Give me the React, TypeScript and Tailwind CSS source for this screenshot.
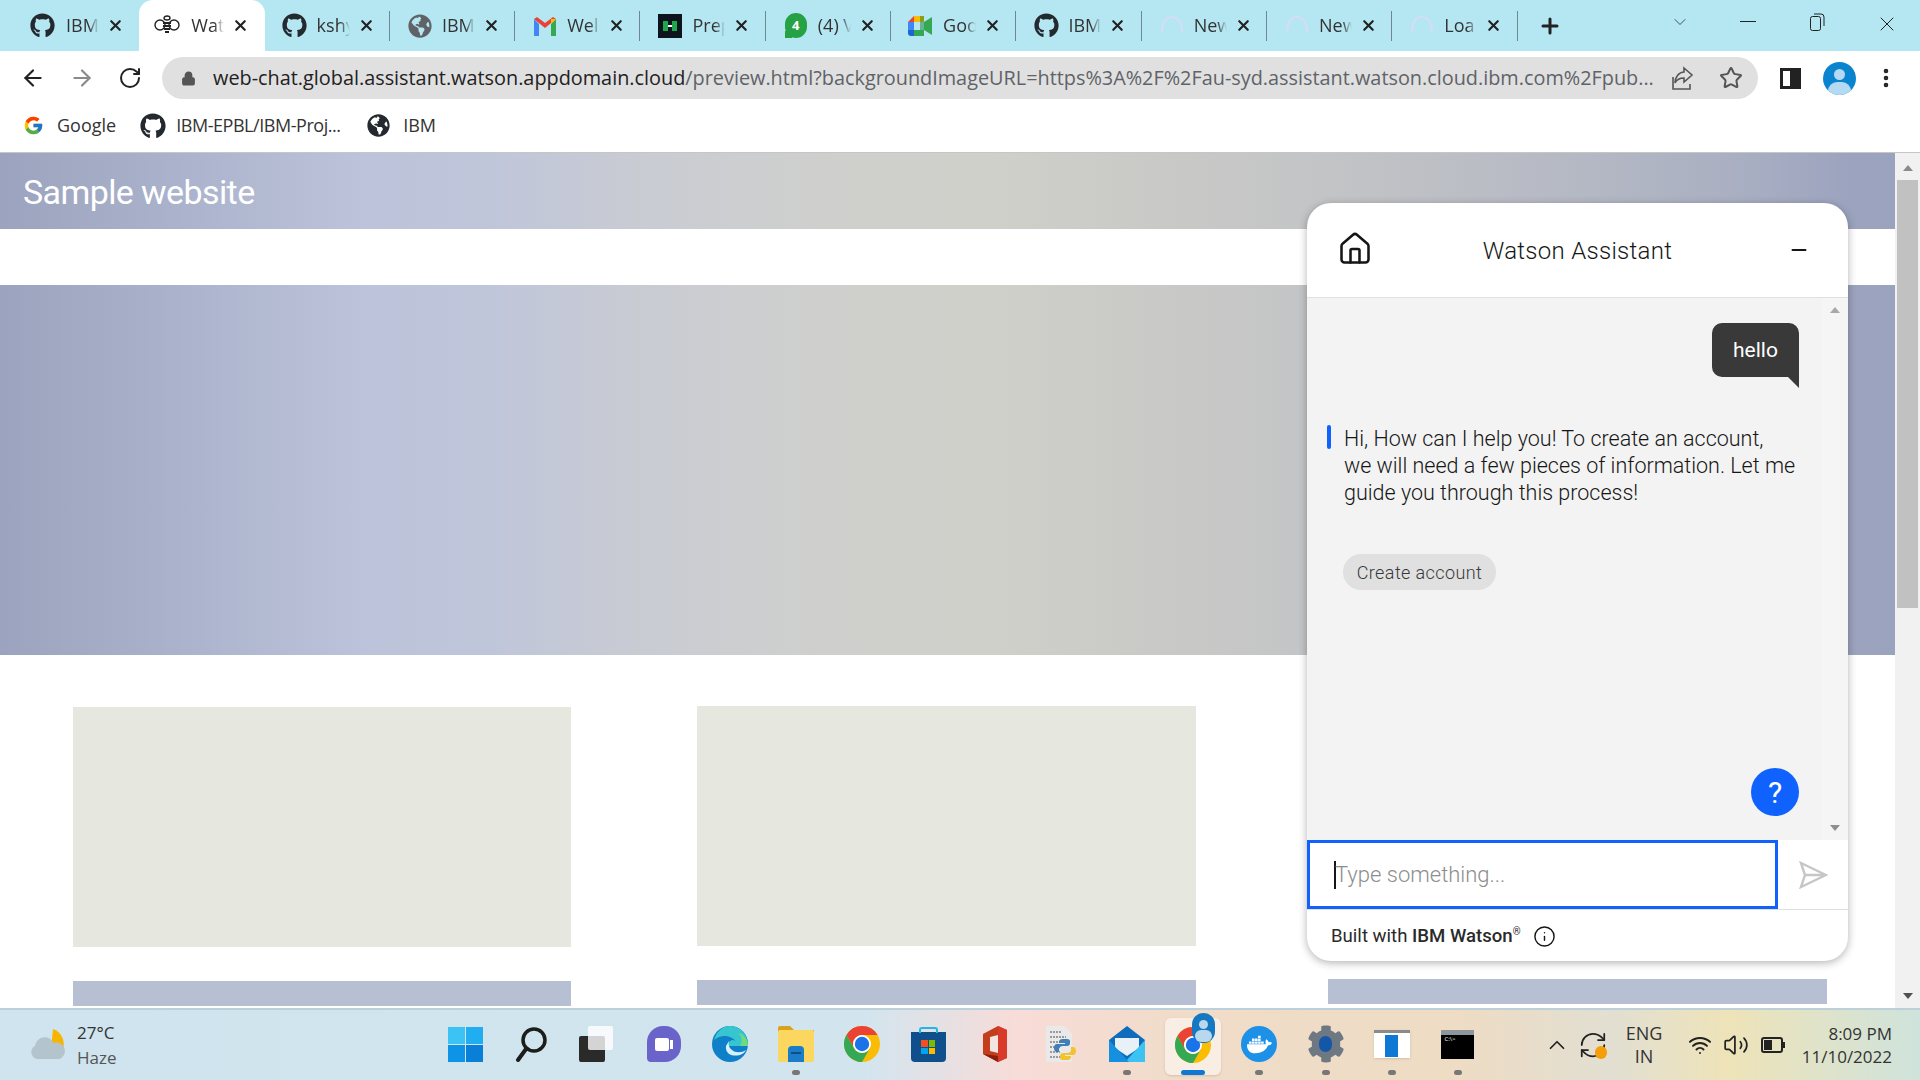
import React from "react";
import { X, Plus, ArrowLeft, ArrowRight, RotateCw, Lock, Star, EllipsisVertical, Home, Minus, ChevronDown, ChevronUp, Info, Wifi, Volume2, RefreshCw } from "lucide-react";
import { FaGithub, FaGlobeAmericas, FaDocker, FaCog } from "react-icons/fa";
import { FcGoogle } from "react-icons/fc";

const uiFont = "[font-family:'Open_Sans',sans-serif]";
const chatFont = "[font-family:Roboto,sans-serif]";

const Spinner = () => (
  <svg width="26" height="26" viewBox="0 0 26 26" fill="none">
    <path d="M3 19C3 10 7 4 13 4s10 6 10 15" stroke="#d5dcf8" strokeWidth="2.2" />
  </svg>
);

const WatsonBee = () => (
  <svg width="26" height="22" viewBox="0 0 26 22" fill="none" stroke="#222" strokeWidth="1.4">
    <ellipse cx="6" cy="10" rx="5" ry="5" />
    <ellipse cx="20" cy="10" rx="5" ry="5" />
    <ellipse cx="13" cy="3" rx="3" ry="2" fill="#fff" />
    <path d="M9 8h8M9 11h8M10 14h6M11 17h4" strokeWidth="2" />
  </svg>
);

const Gmail = () => (
  <svg width="24" height="20" viewBox="0 0 24 20">
    <path d="M1 3v17h5V8z" fill="#4285f4" />
    <path d="M23 3v17h-5V8z" fill="#34a853" />
    <path d="M1 3l11 9 11-9-3-2-8 6-8-6z" fill="#ea4335" />
    <path d="M18 3l5 0-5 5z" fill="#fbbc04" />
  </svg>
);

const HackerRank = () => (
  <div className="flex h-[24px] w-[24px] items-center justify-center bg-[#0e141e]">
    <div className="flex h-[10px] w-[14px] items-stretch justify-between">
      <div className="w-[5px] bg-[#1ba94c]" />
      <div className="mt-[4px] h-[2px] w-[4px] bg-white" />
      <div className="w-[5px] bg-[#1ba94c]" />
    </div>
  </div>
);

const WhatsApp = () => (
  <div className="relative flex h-[25px] w-[22px] items-center justify-center rounded-full border-2 border-[#25a244] bg-[#25a244] text-[13px] font-bold text-white">
    4
    <div className="absolute -bottom-[2px] -left-[2px] h-[7px] w-[7px] bg-[#25a244]" />
  </div>
);

const Meet = () => (
  <svg width="26" height="22" viewBox="0 0 26 22">
    <path d="M6 1h10v6H6z" fill="#fbbc04" />
    <path d="M6 1L0 7h6z" fill="#ea4335" />
    <path d="M0 7h6v8H0z" fill="#4285f4" />
    <path d="M0 15h6v6H3a3 3 0 0 1-3-3z" fill="#1967d2" />
    <path d="M6 15h10v6H6z" fill="#34a853" />
    <path d="M16 7l8-5v18l-8-5z" fill="#34a853" />
    <path d="M16 1v14h-4V1z" fill="#188038" opacity="0.5" />
  </svg>
);

const Chrome = ({ size = 36 }: { size?: number }) => (
  <svg width={size} height={size} viewBox="4 4 40 40">
    <circle cx="24" cy="24" r="20" fill="#fbbc04" />
    <path d="M24 4A20 20 0 0 1 41.32 14H24A10 10 0 0 0 15.34 29L6.68 14A20 20 0 0 1 24 4z" fill="#ea4335" />
    <path d="M6.68 14L15.34 29A10 10 0 0 0 32.66 29L24 44A20 20 0 0 1 6.68 14z" fill="#34a853" />
    <circle cx="24" cy="24" r="10" fill="#fff" />
    <circle cx="24" cy="24" r="8" fill="#1a73e8" />
  </svg>
);

const tabs = [
  { icon: <FaGithub size={25} color="#24292f" />, label: "IBM" },
  { icon: <WatsonBee />, label: "Wat", active: true },
  { icon: <FaGithub size={25} color="#24292f" />, label: "kshy" },
  { icon: <FaGlobeAmericas size={24} color="#5f6368" />, label: "IBM" },
  { icon: <Gmail />, label: "Wel" },
  { icon: <HackerRank />, label: "Prep" },
  { icon: <WhatsApp />, label: "(4) V" },
  { icon: <Meet />, label: "Goo" },
  { icon: <FaGithub size={25} color="#24292f" />, label: "IBM" },
  { icon: <Spinner />, label: "New" },
  { icon: <Spinner />, label: "New" },
  { icon: <Spinner />, label: "Loa" },
];

const TabStrip = () => (
  <div className="flex h-[51px] shrink-0 items-stretch bg-[#b5e7f3] pl-[14px]">
    {tabs.map((tab, i) => (
      <div
        key={i}
        className={
          "flex w-[125.3px] items-center " +
          (i < 2 ? "pl-[15px] " : "pl-[17px] ") +
          (tab.active ? "rounded-t-[14px] bg-white " : "") +
          (!tab.active && i !== 0 ? "relative" : "")
        }
      >
        <div className="flex w-[26px] shrink-0 justify-center">{tab.icon}</div>
        <div
          className={
            "w-[33px] overflow-hidden whitespace-nowrap text-[18px] text-[#333] [mask-image:linear-gradient(90deg,#000_70%,transparent)] " +
            (i < 2 ? "ml-[11px]" : "ml-[9px]")
          }
        >
          {tab.label}
        </div>
        <X size={17} strokeWidth={3} className="ml-[8px] shrink-0 text-[#222]" />
        {i >= 2 && <div className="absolute right-0 top-[11px] h-[30px] w-px bg-[#6f8790]" />}
      </div>
    ))}
    <div className="ml-[20px] flex items-center">
      <Plus size={24} strokeWidth={3} className="text-[#222]" />
    </div>
    <div className="ml-auto flex items-start pt-[12px] text-[#333]">
      <ChevronDown size={20} strokeWidth={1} />
      <div className="ml-[50px] mt-[9px] h-px w-[16px] bg-[#222]" />
      <svg width="18" height="20" viewBox="0 0 18 20" fill="none" stroke="#222" className="ml-[52px]">
        <rect x="2.5" y="4.5" width="10" height="14" rx="2" />
        <path d="M6 2h7a3 3 0 0 1 3 3v9" />
      </svg>
      <X size={24} strokeWidth={1} className="ml-[49px] mr-[21px] text-[#222]" />
    </div>
  </div>
);

const Toolbar = () => (
  <div className="flex h-[51px] shrink-0 items-center bg-white pt-[3px]">
    <ArrowLeft size={26} strokeWidth={2} className="ml-[20px] text-[#222]" />
    <ArrowRight size={26} strokeWidth={2} className="ml-[23px] text-[#8a8a8a]" />
    <RotateCw size={24} strokeWidth={2} className="ml-[23px] text-[#222]" />
    <div className="ml-[20px] flex h-[42px] w-[1596px] items-center rounded-full bg-[#e0e0e0] pl-[19px]">
      <Lock size={15} fill="#555" strokeWidth={2.4} className="shrink-0 text-[#555]" />
      <div className={"ml-[17px] w-[1445px] overflow-hidden whitespace-nowrap text-[19.85px] text-[#5f6368] " + uiFont}>
        <span className="text-[#222]">web-chat.global.assistant.watson.appdomain.cloud</span>
        /preview.html?backgroundImageURL=https%3A%2F%2Fau-syd.assistant.watson.cloud.ibm.com%2Fpub...
      </div>
      <svg width="24" height="26" viewBox="0 0 24 26" fill="none" stroke="#555" strokeWidth="1.6" className="ml-[13px] shrink-0">
        <path d="M2 12v12h17v-5M13 3l8 7-8 7v-4c-4 0-7 1-9 5 0-6 4-11 9-11z" />
      </svg>
      <Star size={24} strokeWidth={2} className="ml-[24px] shrink-0 text-[#555]" />
    </div>
    <div className="ml-[22px] flex h-[21px] w-[21px] justify-end border-[3px] border-[#222] bg-white">
      <div className="w-[8px] bg-[#222]" />
    </div>
    <div className="relative ml-[22px] h-[33px] w-[33px] overflow-hidden rounded-full bg-[#0b84d0]">
      <div className="absolute left-[11px] top-[7px] h-[11px] w-[11px] rounded-full bg-[#b4d9f2]" />
      <div className="absolute left-[5px] top-[20px] h-[18px] w-[23px] rounded-full bg-[#b4d9f2]" />
    </div>
    <EllipsisVertical size={24} strokeWidth={2.6} className="ml-[18px] text-[#222]" />
  </div>
);

const Bookmarks = () => (
  <div className={"flex h-[51px] shrink-0 items-center border-b border-[#c6c6c6] bg-white pb-[3px] text-[18px] text-[#333] " + uiFont}>
    <FcGoogle size={21} className="ml-[23px]" />
    <span className="ml-[13px]">Google</span>
    <FaGithub size={26} color="#24292f" className="ml-[24px]" />
    <span className="ml-[10px] w-[168px] whitespace-nowrap tracking-[-0.45px]">IBM-EPBL/IBM-Proj...</span>
    <FaGlobeAmericas size={23} color="#24292f" className="ml-[23px]" />
    <span className="ml-[13px]">IBM</span>
  </div>
);

const banner = "bg-[linear-gradient(90deg,#9ba3be_0%,#bcc3da_19.3%,#c0c6da_26%,#c8cbd3_33%,#cfd0cd_44%,#cfd0c9_52.5%,#c9c9c7_61%,#c4c5c6_68.6%,#b4b8c4_84%,#a9afc2_92%,#9ca3be_97.6%,#9aa3bd_100%)]";

const ChatWidget = () => (
  <div className={"absolute left-[1307px] top-[50px] flex h-[758px] w-[541px] flex-col overflow-hidden rounded-[24px] bg-white shadow-[0_2px_8px_rgba(0,0,0,0.3)] " + chatFont}>
    <div className="relative flex h-[95px] shrink-0 items-center justify-center border-b border-[#e0e0e0] pt-[1px] text-[24px] font-light tracking-[0.3px] text-[#161616]">
      <Home size={36} strokeWidth={1.7} className="absolute left-[30px] top-[28px] text-[#161616]" />
      Watson Assistant
      <Minus size={22} strokeWidth={2.4} className="absolute right-[38px] top-[36px] text-[#161616]" />
    </div>
    <div className="flex min-h-0 flex-1 bg-[#f3f3f3]">
      <div className="relative flex-1 pl-[20px] pt-[25px]">
        <div className="flex justify-end pr-[22px]">
          <div className="relative flex h-[54px] w-[87px] items-center justify-center rounded-[10px] rounded-br-none bg-[#393939] pt-[2px] text-[21px] text-white">
            hello
            <div className="absolute right-0 top-full h-0 w-0 border-l-[11px] border-t-[11px] border-l-transparent border-t-[#393939]" />
          </div>
        </div>
        <div className="mt-[48px] flex">
          <div className="mr-[13px] h-[24px] w-[4px] shrink-0 rounded-[2px] bg-[#0f62fe]" />
          <p className="whitespace-nowrap text-[21.5px] font-light leading-[27px] text-[#161616]">
            Hi, How can I help you! To create an account,
            <br />
            we will need a few pieces of information. Let me
            <br />
            guide you through this process!
          </p>
        </div>
        <div className="ml-[16px] mt-[48px] flex h-[36px] w-[153px] items-center justify-center rounded-full bg-[#e0e0e0] text-[18px] font-light tracking-[0.4px] text-[#393939]">
          Create account
        </div>
        <div className="absolute bottom-[24px] right-[22px] flex h-[48px] w-[48px] items-center justify-center rounded-full bg-[#0f62fe] text-[30px] text-white">
          ?
        </div>
      </div>
      <div className="flex w-[27px] flex-col items-center justify-between bg-[#f5f5f5] py-[9px]">
        <div className="h-0 w-0 border-x-[5px] border-b-[6px] border-x-transparent border-b-[#a8a8a8]" />
        <div className="h-0 w-0 border-x-[5px] border-t-[6px] border-x-transparent border-t-[#8f8f8f]" />
      </div>
    </div>
    <div className="flex h-[69px] shrink-0 items-center">
      <div className="flex h-full w-[471px] items-center border-[3px] border-[#0f62fe] pl-[24px] text-[22px] font-light text-[#8d8d8d]">
        <div className="h-[28px] w-[2px] bg-[#161616]" />
        <span className="-ml-[1px]">Type something...</span>
      </div>
      <svg width="29" height="28" viewBox="0 0 29 28" fill="none" stroke="#c6c6c6" strokeWidth="2.4" className="ml-[21px]">
        <path d="M2 2l25 12L2 26l4-12zM6 14h21" />
      </svg>
    </div>
    <div className="flex h-[52px] shrink-0 items-center border-t border-[#e0e0e0] pl-[24px] pt-[2px] text-[18.6px] text-[#2a2a2a]">
      Built with&nbsp;<span className="font-medium">IBM Watson</span>
      <sup className="text-[10px]">®</sup>
      <Info size={23} strokeWidth={1.5} className="ml-[12px] text-[#161616]" />
    </div>
  </div>
);

const PageContent = () => (
  <div className="relative min-w-0 flex-1 overflow-hidden bg-white">
    <div className={"flex h-[76px] items-center pl-[23px] pt-[2px] text-[34px] tracking-[-0.6px] text-white " + banner + " " + chatFont}>
      Sample website
    </div>
    <div className={"mt-[56px] h-[370px] " + banner} />
    <div className="mt-[50px] flex pl-[73px]">
      <div className="mt-[2px] w-[498px]">
        <div className="h-[240px] bg-[#e6e7de]" />
        <div className="mt-[34px] h-[25px] bg-[#b7bfd3]" />
      </div>
      <div className="ml-[126px] mt-[1px] w-[499px]">
        <div className="h-[240px] bg-[#e6e7de]" />
        <div className="mt-[34px] h-[25px] bg-[#b7bfd3]" />
      </div>
      <div className="ml-[132px] w-[499px]">
        <div className="h-[240px] bg-[#e6e7de]" />
        <div className="mt-[34px] h-[25px] bg-[#b7bfd3]" />
      </div>
    </div>
    <ChatWidget />
  </div>
);

const PageScrollbar = () => (
  <div className="flex w-[25px] shrink-0 flex-col items-center bg-[#f1f1f1]">
    <div className="mt-[12px] h-0 w-0 border-x-[5px] border-b-[6px] border-x-transparent border-b-[#8a8a8a]" />
    <div className="mt-[9px] h-[428px] w-[21px] bg-[#c1c1c1]" />
    <div className="mb-[9px] mt-auto h-0 w-0 border-x-[5px] border-t-[6px] border-x-transparent border-t-[#505050]" />
  </div>
);

const taskIcons: { icon: React.ReactNode; dot?: boolean; active?: boolean }[] = [
  {
    icon: (
      <div className="grid h-[35px] w-[35px] grid-cols-2 gap-[1px]">
        <div className="bg-[#3cc3f4]" />
        <div className="bg-[#20aef0]" />
        <div className="bg-[#0e94e6]" />
        <div className="bg-[#0a7fd8]" />
      </div>
    ),
  },
  {
    icon: (
      <svg width="34" height="36" viewBox="0 0 34 36" fill="none" stroke="#1c1c1c" strokeWidth="3.5">
        <circle cx="20" cy="14" r="11" />
        <path d="M12 23L4 34" strokeLinecap="round" strokeWidth="4" />
      </svg>
    ),
  },
  {
    icon: (
      <div className="relative h-[36px] w-[36px]">
        <div className="absolute bottom-0 left-0 h-[26px] w-[26px] rounded-[2px] bg-[#2a2a2a]" />
        <div className="absolute left-[9px] top-0 h-[24px] w-[25px] rounded-[2px] bg-white/80" />
      </div>
    ),
  },
  {
    icon: (
      <div className="flex h-[36px] w-[34px] items-center justify-center rounded-[16px] rounded-bl-[4px] bg-[#6a63c9]">
        <div className="h-[13px] w-[14px] rounded-[2px] bg-white" />
        <div className="ml-[1px] h-[9px] w-[3px] bg-white" />
      </div>
    ),
  },
  {
    icon: (
      <svg width="36" height="36" viewBox="0 0 36 36">
        <circle cx="18" cy="18" r="18" fill="#0f7fc9" />
        <path d="M2 14C5 4 12 0 18 0c10 0 18 8 18 20H16c0-6 6-8 8-4-3-6-14-9-22-2z" fill="#37c6d0" />
        <path d="M36 20c0-6-4-12-10-13 4 3 5 8 2 13z" fill="#6fdc7a" />
        <path d="M14 20c-1 8 6 11 14 9 3-1 5-3 6-5-4 3-11 3-14 0-3-2-4-5-3-9z" fill="#d6f1fa" />
      </svg>
    ),
  },
  {
    dot: true,
    icon: (
      <svg width="36" height="36" viewBox="0 0 36 36">
        <path d="M0 2a2 2 0 0 1 2-2h10l4 4h20v6H0z" fill="#d9a21b" />
        <rect y="4" width="36" height="32" rx="2" fill="#fcd75f" />
        <path d="M10 24a4 4 0 0 1 4-4h8a4 4 0 0 1 4 4v12H10z" fill="#1b7cc8" />
        <rect x="13" y="26" width="10" height="2" fill="#0d4f8a" />
      </svg>
    ),
  },
  { icon: <Chrome size={36} /> },
  {
    icon: (
      <div className="relative mt-[6px] flex h-[30px] w-[35px] items-center justify-center rounded-b-[4px] bg-[#0f4f8c]">
        <div className="absolute -top-[5px] left-[8px] h-[6px] w-[19px] rounded-t-[3px] border-[2px] border-b-0 border-[#1fb6e8]" />
        <div className="grid h-[14px] w-[14px] grid-cols-2 gap-[1px]">
          <div className="bg-[#f25022]" />
          <div className="bg-[#7fba00]" />
          <div className="bg-[#00a4ef]" />
          <div className="bg-[#ffb900]" />
        </div>
      </div>
    ),
  },
  {
    icon: (
      <svg width="28" height="36" viewBox="0 0 28 36">
        <path d="M2 8L17 0l9 4v28l-9 4L2 28z" fill="#c43e1c" />
        <path d="M17 0l9 4v28l-9 4z" fill="#d83b2a" />
        <path d="M9 11l8-2v18l-8-2z" fill="#f3e6e2" />
        <path d="M2 28l15 8v-6z" fill="#8a1f0e" />
      </svg>
    ),
  },
  {
    icon: (
      <svg width="34" height="36" viewBox="0 0 34 36">
        <path d="M2 0h18l8 8v28H2z" fill="#e9e9e9" />
        <path d="M6 6h12M6 11h16M6 16h12M6 21h10M6 26h10M6 31h12" stroke="#9a9a9a" strokeWidth="2" strokeDasharray="2 1" />
        <path d="M20 13c-5 0-5 2-5 4h6v1h-8c-2 0-3 2-3 4s1 4 3 4h2v-3c0-2 2-3 4-3h4c2 0 3-1 3-3v-2c0-2-3-2-6-2z" fill="#3f7fb5" />
        <path d="M22 34c5 0 5-2 5-4h-6v-1h8c2 0 3-2 3-4s-1-4-3-4h-2v3c0 2-2 3-4 3h-4c-2 0-3 1-3 3v2c0 2 3 2 6 2z" fill="#f2c230" />
      </svg>
    ),
  },
  {
    dot: true,
    icon: (
      <svg width="36" height="36" viewBox="0 0 36 36">
        <path d="M18 0l18 14v22H0V14z" fill="#0f6cbd" />
        <path d="M6 12h24v10l-12 8-12-8z" fill="#e8f1f8" />
        <path d="M36 14v22H16z" fill="#3cc3f4" />
        <path d="M0 14v22h20z" fill="#1490df" />
      </svg>
    ),
  },
  {
    active: true,
    icon: (
      <div className="relative mt-[2px]">
        <Chrome size={36} />
        <div className="absolute -right-[4px] -top-[14px] h-[30px] w-[23px] overflow-hidden rounded-full bg-[#1578c2]">
          <div className="absolute left-[7px] top-[7px] h-[9px] w-[9px] rounded-full bg-[#b9d8ee]" />
          <div className="absolute left-[3px] top-[17px] h-[12px] w-[17px] rounded-full bg-[#b9d8ee]" />
        </div>
      </div>
    ),
  },
  {
    dot: true,
    icon: (
      <div className="flex h-[36px] w-[36px] items-center justify-center rounded-full bg-[#1d91e8]">
        <FaDocker size={25} color="#fff" />
      </div>
    ),
  },
  {
    dot: true,
    icon: (
      <div className="relative flex h-[38px] w-[38px] items-center justify-center">
        <FaCog size={38} color="#6d7883" />
        <div className="absolute h-[16px] w-[13px] rounded-full bg-[#1457a8]" />
      </div>
    ),
  },
  {
    dot: true,
    icon: (
      <div className="flex h-[28px] w-[36px] items-center justify-center gap-[2px] border-t-[3px] border-[#8a8a8a] bg-white shadow-sm">
        <div className="h-[22px] w-[13px] bg-[#0f78d4]" />
      </div>
    ),
  },
  {
    dot: true,
    icon: (
      <div className="h-[29px] w-[33px] bg-black">
        <div className="h-[5px] bg-[#8f959c]" />
        <div className="ml-[3px] mt-[1px] text-[6px] leading-none text-white">C:\&gt;</div>
      </div>
    ),
  },
];

const TaskbarTile = ({ item }: { item: (typeof taskIcons)[number] }) => (
  <div className="relative flex h-[72px] w-[66.2px] shrink-0 items-center justify-center pb-[2px]">
    {item.active && <div className="absolute bottom-[6px] left-[5px] top-[9px] w-[56px] rounded-[6px] bg-white/50 shadow-sm" />}
    <div className="relative flex items-center justify-center">{item.icon}</div>
    {item.dot && <div className="absolute bottom-[6px] h-[5px] w-[8px] rounded-full bg-[#777]" />}
    {item.active && <div className="absolute bottom-[6px] h-[5px] w-[24px] rounded-full bg-[#0f78d4]" />}
  </div>
);

const Taskbar = () => (
  <div className={"flex h-[72px] shrink-0 items-center border-t-2 border-[#bdd0da] text-[#333] bg-[linear-gradient(90deg,#cfe4ee_0%,#d2e5ef_45%,#f8dcd8_53%,#f0dcc8_62%,#eedcc4_76%,#e2dfd2_84%,#eee3b8_90%,#cfe3dc_100%)] " + uiFont}>
    <div className="flex w-[432px] shrink-0 items-center pl-[29px]">
      <svg width="36" height="32" viewBox="0 0 36 32">
        <path d="M24 0a16 16 0 0 1 10 20H22z" fill="#f7b500" />
        <path d="M8 30a7 7 0 0 1-2-13 10 10 0 0 1 19-3 8 8 0 0 1 5 16z" fill="#b3c4cc" />
      </svg>
      <div className="ml-[12px] flex flex-col text-[17px] leading-[25px]">
        <span>27°C</span>
        <span className="text-[#555]">Haze</span>
      </div>
    </div>
    {taskIcons.map((item, i) => (
      <TaskbarTile key={i} item={item} />
    ))}
    <div className="ml-[53px] flex flex-1 items-center">
      <ChevronUp size={26} strokeWidth={1.6} className="text-[#222]" />
      <div className="relative ml-[8px] h-[30px] w-[30px]">
        <RefreshCw size={30} strokeWidth={1.4} className="text-[#222]" />
        <div className="absolute bottom-[1px] right-[1px] h-[13px] w-[12px] rounded-full bg-[#f59e0b]" />
      </div>
      <div className="ml-[13px] flex w-[46px] flex-col items-center text-[18px] leading-[23px]">
        <span>ENG</span>
        <span>IN</span>
      </div>
      <Wifi size={24} strokeWidth={2} className="ml-[21px] text-[#222]" />
      <Volume2 size={26} strokeWidth={1.6} className="ml-[11px] text-[#222]" />
      <div className="ml-[12px] flex items-center">
        <div className="flex h-[16px] w-[22px] rounded-[3px] border-2 border-[#222] p-[1px]">
          <div className="w-[8px] bg-[#222]" />
        </div>
        <div className="h-[6px] w-[2px] bg-[#222]" />
      </div>
      <div className="ml-auto mr-[28px] flex flex-col items-end text-[17px] leading-[23px]">
        <span>8:09 PM</span>
        <span>11/10/2022</span>
      </div>
    </div>
  </div>
);

const App = () => {
  return (
    <div className={"flex h-screen w-screen flex-col overflow-hidden bg-white " + uiFont}>
      <TabStrip />
      <Toolbar />
      <Bookmarks />
      <div className="flex min-h-0 flex-1">
        <PageContent />
        <PageScrollbar />
      </div>
      <Taskbar />
    </div>
  );
};

export default App;
